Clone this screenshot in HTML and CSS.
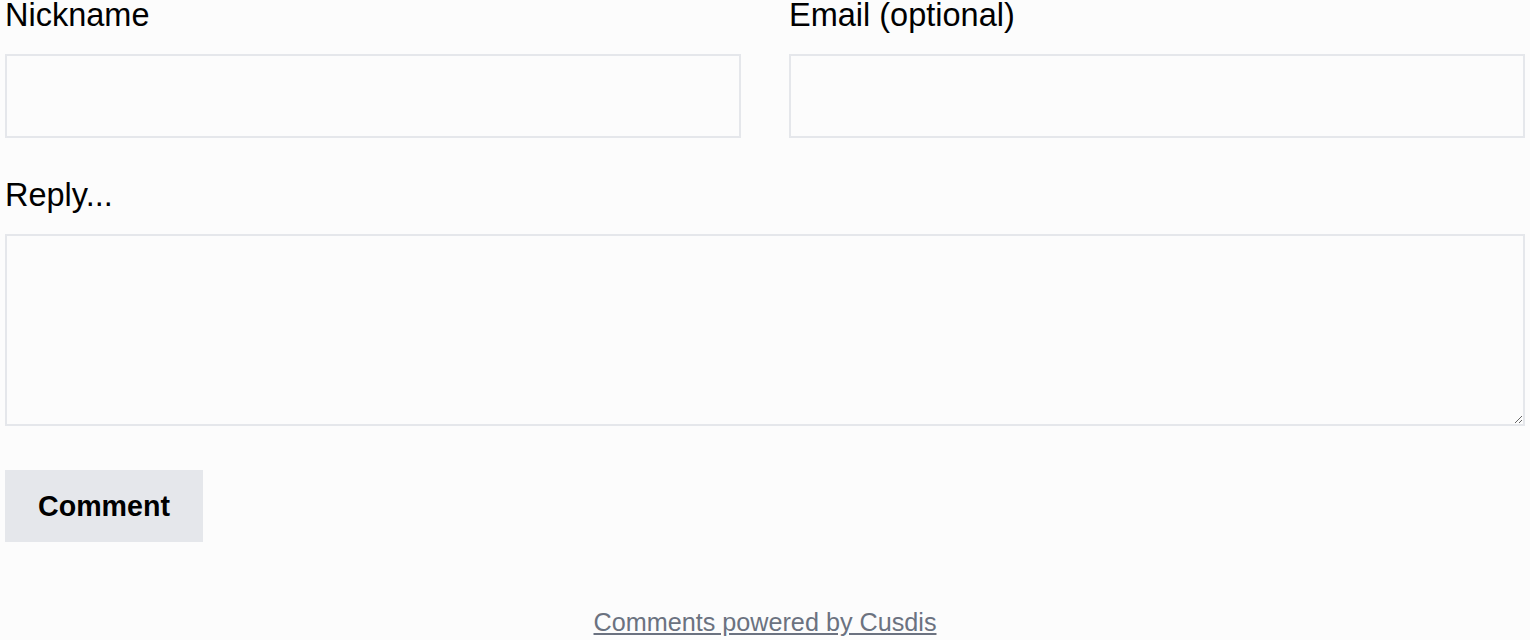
FILE: index.html
```html
<!DOCTYPE html>
<html lang="en">
<head>
<meta charset="utf-8">
<title>Cusdis comment form</title>
<link rel="stylesheet" href="styles.css">
</head>
<body>
<div class="page">
  <form class="form">
    <div class="row">
      <div class="field">
        <label class="label" for="nickname">Nickname</label>
        <input class="input" id="nickname" type="text">
      </div>
      <div class="field">
        <label class="label" for="email">Email (optional)</label>
        <input class="input" id="email" type="email">
      </div>
    </div>
    <div class="field field-full">
      <label class="label" for="reply">Reply...</label>
      <textarea class="textarea" id="reply"></textarea>
    </div>
    <div class="actions">
      <button class="button" type="button">Comment</button>
    </div>
  </form>
  <div class="footer">
    <a class="footer-link" href="#">Comments powered by Cusdis</a>
  </div>
</div>
</body>
</html>
```
FILE: styles.css
```css
html, body {
  margin: 0;
  padding: 0;
  background: #fcfcfc;
}

body {
  font-family: "Liberation Sans", Arial, sans-serif;
  color: #000;
}

.page {
  padding: 0 5px;
}

.row {
  display: grid;
  grid-template-columns: 1fr 1fr;
  column-gap: 48px;
}

.field {
  display: flex;
  flex-direction: column;
}

.label {
  display: block;
  font-size: 32.5px;
  line-height: 30px;
  margin-bottom: 24px;
}

.input,
.textarea {
  box-sizing: border-box;
  width: 100%;
  margin: 0;
  border: 2px solid #e5e7eb;
  background: #fcfcfc;
  font-family: inherit;
  font-size: 28px;
  padding: 8px;
  outline: none;
}

.input {
  height: 84px;
}

.field-full {
  margin-top: 42px;
}

.textarea {
  height: 192px;
  display: block;
}

.actions {
  margin-top: 44px;
}

.button {
  width: 198px;
  height: 72px;
  border: 0;
  margin: 0;
  padding: 0;
  background: #e5e7eb;
  font-family: "Liberation Sans", Arial, sans-serif;
  font-weight: bold;
  font-size: 28.6px;
  color: #000;
}

.footer {
  margin-top: 65px;
  text-align: center;
  font-size: 25.2px;
  line-height: 30px;
}

.footer-link {
  color: #6b7280;
  text-decoration: underline;
}
```
